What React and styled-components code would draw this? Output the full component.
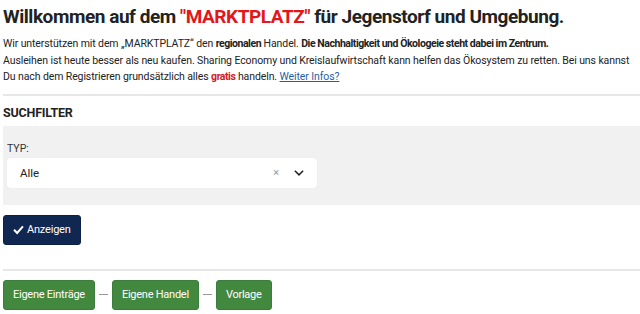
import styled, { createGlobalStyle } from "styled-components"

const Global = createGlobalStyle`
  body {
    margin: 0;
    background: #fff;
    font-family: Roboto, "Liberation Sans", sans-serif;
    color: #212529;
  }
`

const App = () => {
  return (
    <>
      <Global />
      <Page>
        <Title>
          Willkommen auf dem <Red>"MARKTPLATZ"</Red> für Jegenstorf und Umgebung.
        </Title>
        <Intro>
          Wir unterstützen mit dem „MARKTPLATZ“ den <b>regionalen</b> Handel. <b>Die Nachhaltigkeit und Ökologeie steht dabei im Zentrum.</b>
          <br />
          Ausleihen ist heute besser als neu kaufen. Sharing Economy und Kreislaufwirtschaft kann helfen das Ökosystem zu retten. Bei uns kannst Du nach dem Registrieren grundsätzlich alles <RedBold>gratis</RedBold> handeln. <Link href="#">Weiter Infos?</Link>
        </Intro>
        <Divider />
        <SectionTitle>SUCHFILTER</SectionTitle>
        <FilterPanel>
          <Label>TYP:</Label>
          <Select>
            <SelectValue>Alle</SelectValue>
            <Clear>×</Clear>
            <Chevron viewBox="0 0 16 16">
              <path d="M2.5 5 L8 10.5 L13.5 5" fill="none" stroke="#222" strokeWidth="2" />
            </Chevron>
          </Select>
        </FilterPanel>
        <SubmitRow>
          <PrimaryButton>
            <svg width="11" height="11" viewBox="0 0 16 16">
              <path d="M1.5 8.5 L6 13 L14.5 3.5" fill="none" stroke="#fff" strokeWidth="3" />
            </svg>
            Anzeigen
          </PrimaryButton>
        </SubmitRow>
        <Divider />
        <ButtonRow>
          <GreenButton>Eigene Einträge</GreenButton>
          <Dash />
          <GreenButton>Eigene Handel</GreenButton>
          <Dash />
          <GreenButton>Vorlage</GreenButton>
        </ButtonRow>
      </Page>
    </>
  )
}

const Page = styled.div`
  padding: 0 0 0 3px;
`

const Title = styled.h1`
  margin: 0;
  padding-top: 3px;
  font-size: 19px;
  font-weight: 700;
  line-height: 28px;
  color: #222;
  letter-spacing: -0.45px;
  white-space: nowrap;
`

const Red = styled.span`
  color: #e3161b;
`

const RedBold = styled.b`
  color: #d71920;
`

const Intro = styled.p`
  margin: 5px 0 0;
  font-size: 10.5px;
  line-height: 16.5px;
  letter-spacing: -0.1px;
  color: #222;
  & b {
    font-weight: 700;
    letter-spacing: -0.45px;
  }
`

const Link = styled.a`
  color: #1f5fa8;
  text-decoration: underline;
`

const Divider = styled.hr`
  margin: 8px 0 0;
  border: none;
  border-top: 2px solid #e7e7e7;
`

const SectionTitle = styled.h2`
  margin: 0;
  padding-top: 7px;
  font-size: 12.5px;
  font-weight: 700;
  line-height: 20px;
  letter-spacing: -0.2px;
  color: #222;
`

const FilterPanel = styled.div`
  margin-top: 3px;
  background: #f1f1f1;
  padding: 16px 0 17px 4px;
  display: flex;
  flex-direction: column;
`

const Label = styled.label`
  font-size: 10.5px;
  line-height: 14px;
  color: #333;
`

const Select = styled.div`
  margin-top: 2px;
  width: 310px;
  height: 30px;
  box-sizing: border-box;
  background: #fff;
  border-radius: 3px;
  box-shadow: 0 0 1px rgba(0, 0, 0, 0.15);
  display: flex;
  align-items: center;
  padding: 0 12px 0 13px;
`

const SelectValue = styled.span`
  flex: 1;
  font-size: 11.5px;
  color: #222;
`

const Clear = styled.span`
  font-size: 11px;
  color: #999;
  margin-right: 14px;
`

const Chevron = styled.svg`
  width: 12px;
  height: 12px;
`

const SubmitRow = styled.div`
  padding: 10px 0 16px;
`

const PrimaryButton = styled.button`
  height: 30px;
  padding: 0 9px;
  display: inline-flex;
  align-items: center;
  gap: 3px;
  border: 1px solid #0c1f45;
  border-radius: 3px;
  background: #102752;
  color: #fff;
  font-family: inherit;
  font-size: 11px;
  letter-spacing: -0.2px;
`

const ButtonRow = styled.div`
  padding-top: 9px;
  display: flex;
  align-items: center;
`

const GreenButton = styled.button`
  height: 30px;
  padding: 0 9px;
  border: 1px solid #3a7d3d;
  border-radius: 3px;
  background: #43883f;
  color: #fff;
  font-family: inherit;
  font-size: 11px;
  letter-spacing: -0.25px;
`

const Dash = styled.span`
  width: 9px;
  height: 1px;
  background: #999;
  margin: 0 4px;
`

export default App
